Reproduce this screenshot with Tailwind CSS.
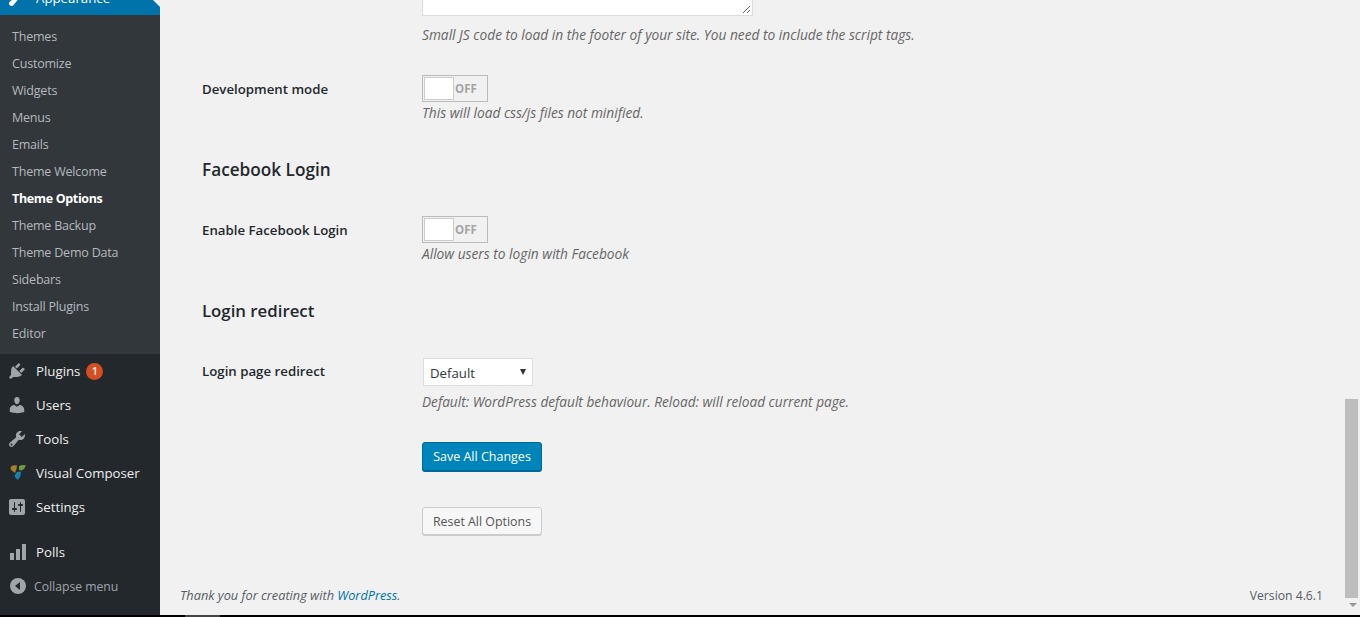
<!DOCTYPE html>
<html>
<head>
<meta charset="utf-8">
<script src="https://cdn.jsdelivr.net/npm/@tailwindcss/browser@4"></script>
</head>
<body class="m-0 h-[617px] w-[1360px] overflow-hidden bg-[#f1f1f1] font-['Open_Sans','Noto_Sans',sans-serif] text-[14px] text-[#444]">
<div class="flex h-[615px] w-full overflow-hidden">
  <aside class="flex h-[615px] w-[160px] shrink-0 flex-col overflow-hidden bg-[#23282d] text-[13.25px] text-[#eee]">
    <div class="relative -mt-[19px] flex h-[34px] shrink-0 items-center bg-[#0073aa] text-white">
      <svg class="ml-[7px] h-[20px] w-[20px]" viewBox="0 0 20 20" fill="#fff"><path d="M16.68 9.77c-1.34 1.34-3.3 1.67-4.95.99l-5.41 6.52c-.99.99-2.59.99-3.58 0s-.99-2.59 0-3.57l6.52-5.42c-.68-1.65-.35-3.61.99-4.95 1.28-1.28 3.12-1.62 4.72-1.06l-2.89 2.89 2.82 2.82 2.86-2.87c.53 1.58.18 3.39-1.08 4.65z"/></svg>
      <span class="ml-[9px] pt-[2px]">Appearance</span>
      <span class="absolute right-0 top-[10px] h-0 w-0 border-y-[8px] border-r-[8px] border-y-transparent border-r-[#f1f1f1]"></span>
    </div>
    <nav class="flex shrink-0 flex-col bg-[#32373c] pb-[7px] pt-[8px] text-[12.5px] leading-[27px] tracking-[-0.2px] text-[#b4b9be]">
      <a class="h-[27px] pl-3">Themes</a>
      <a class="h-[27px] pl-3">Customize</a>
      <a class="h-[27px] pl-3">Widgets</a>
      <a class="h-[27px] pl-3">Menus</a>
      <a class="h-[27px] pl-3">Emails</a>
      <a class="h-[27px] pl-3">Theme Welcome</a>
      <a class="h-[27px] pl-3 font-bold tracking-[-0.35px] text-white">Theme Options</a>
      <a class="h-[27px] pl-3">Theme Backup</a>
      <a class="h-[27px] pl-3">Theme Demo Data</a>
      <a class="h-[27px] pl-3">Sidebars</a>
      <a class="h-[27px] pl-3">Install Plugins</a>
      <a class="h-[27px] pl-3">Editor</a>
    </nav>
    <div class="flex h-[34px] items-center">
      <svg class="ml-[7px] h-[20px] w-[20px]" viewBox="0 0 20 20" fill="#a0a5aa"><path d="M13.11 4.36L9.87 7.6 8 5.73l3.24-3.24c.35-.34 1.05-.2 1.56.32.52.51.66 1.21.31 1.55zm-8 1.77l.91-1.12 9.01 9.01-1.19.84c-.71.71-2.63 1.16-3.82 1.16H6.14L4.9 17.26c-.59.59-1.54.59-2.12 0-.59-.58-.59-1.53 0-2.12l1.24-1.24v-3.88c0-1.13.4-3.19 1.09-3.89zm7.26 3.97l3.24-3.24c.34-.35 1.04-.21 1.55.31.52.51.66 1.21.31 1.55l-3.24 3.25z"/></svg>
      <span class="ml-[9px] pt-[2px]">Plugins</span>
      <span class="ml-[6px] flex h-[17px] w-[17px] items-center justify-center rounded-full bg-[#d54e21] text-[10px] font-semibold text-white">1</span>
    </div>
    <div class="flex h-[34px] items-center">
      <svg class="ml-[7px] h-[20px] w-[20px]" viewBox="0 0 20 20" fill="#a0a5aa"><path d="M10 9.25c-2.27 0-2.73-3.44-2.73-3.44C7 4.02 7.82 2 9.97 2c2.16 0 2.98 2.02 2.71 3.81 0 0-.41 3.44-2.68 3.44zm0 2.57L12.72 10c2.39 0 4.52 2.33 4.52 4.53v2.49s-3.65 1.13-7.24 1.13c-3.65 0-7.24-1.13-7.24-1.13v-2.49c0-2.25 1.94-4.48 4.47-4.48z"/></svg>
      <span class="ml-[9px] pt-[2px]">Users</span>
    </div>
    <div class="flex h-[34px] items-center">
      <svg class="ml-[7px] h-[20px] w-[20px]" viewBox="0 0 20 20" fill="#a0a5aa"><path d="M16.68 9.77c-1.34 1.34-3.3 1.67-4.95.99l-5.41 6.52c-.99.99-2.59.99-3.58 0s-.99-2.59 0-3.57l6.52-5.42c-.68-1.65-.35-3.61.99-4.95 1.28-1.28 3.12-1.62 4.72-1.06l-2.89 2.89 2.82 2.82 2.86-2.87c.53 1.58.18 3.39-1.08 4.65zM3.81 16.21c.4.39 1.04.39 1.43 0 .4-.4.4-1.04 0-1.43-.39-.4-1.03-.4-1.43 0-.39.39-.39 1.03 0 1.43z"/></svg>
      <span class="ml-[9px] pt-[2px]">Tools</span>
    </div>
    <div class="flex h-[34px] items-center">
      <svg class="ml-[9px] h-[18px] w-[18px]" viewBox="0 0 18 18"><path fill="#a8802c" d="M2 2.500Q5 .5 8 1.500L7.500 5 6 9Q3 7 1.500 5z"/><path fill="#6f9a3c" d="M10 2Q14 .5 17 1.500 15.500 5 13 6.500L10 6z"/><path fill="#1583ab" d="M8 8l4-.5L11.500 12 9 16Q6 14 5.500 11.500z"/></svg>
      <span class="ml-[9px] pt-[2px]">Visual Composer</span>
    </div>
    <div class="flex h-[34px] items-center">
      <svg class="ml-[7px] h-[20px] w-[20px]" viewBox="0 0 20 20" fill="#a0a5aa"><path d="M18 16V4c0-1.1-.9-2-2-2H4c-1.1 0-2 .9-2 2v12c0 1.1.9 2 2 2h12c1.1 0 2-.9 2-2zM8 11h1c.55 0 1 .45 1 1s-.45 1-1 1H8v1.500c0 .28-.22.5-.5.5s-.5-.22-.5-.5V13H6c-.55 0-1-.45-1-1s.45-1 1-1h1V5.500c0-.28.22-.5.5-.5s.5.22.5.5V11zm5-2h-1c-.55 0-1-.45-1-1s.45-1 1-1h1V5.500c0-.28.22-.5.5-.5s.5.22.5.5V7h1c.55 0 1 .45 1 1s-.45 1-1 1h-1v5.500c0 .28-.22.5-.5.5s-.5-.22-.5-.5V9z"/></svg>
      <span class="ml-[9px] pt-[2px]">Settings</span>
    </div>
    <div class="mt-[11px] flex h-[34px] items-center">
      <svg class="ml-[9px] h-[18px] w-[18px]" viewBox="0 0 18 18" fill="#a0a5aa"><rect x="1" y="10" width="4" height="7"/><rect x="7" y="6" width="4" height="11"/><rect x="13" y="1" width="4" height="16"/></svg>
      <span class="ml-[9px] pt-[2px]">Polls</span>
    </div>
    <div class="flex h-[34px] items-center text-[12.2px] text-[#a0a5aa]">
      <svg class="ml-[9px] h-[18px] w-[18px]" viewBox="0 0 18 18"><circle cx="9" cy="9" r="8" fill="#a0a5aa"/><path d="M11 5v8L6 9z" fill="#23282d"/></svg>
      <span class="ml-[7px] pt-[2px]">Collapse menu</span>
    </div>
  </aside>
  <main class="relative flex min-w-0 flex-1 flex-col">
    <div class="-mt-[30px] flex flex-col pl-[42px]">
      <div class="flex">
        <div class="w-[220px]"></div>
        <div>
          <div class="relative h-[46px] w-[331px] border border-[#ddd] bg-white shadow-[inset_0_1px_2px_rgba(0,0,0,0.07)]">
            <svg class="absolute bottom-[1px] right-[1px] h-[10px] w-[10px]" viewBox="0 0 10 10" stroke="#666" stroke-width="1"><path d="M2 9L9 2M6 9L9 6"/></svg>
          </div>
          <p class="mt-[9px] h-[20px] text-[13.72px] italic leading-[20px] text-[#666]">Small JS code to load in the footer of your site. You need to include the script tags.</p>
        </div>
      </div>
      <div class="mt-[22px] flex">
        <div class="w-[220px] pt-[9px] text-[13.25px] font-semibold leading-[27px] text-[#23282d]">Development mode</div>
        <div class="mt-[8px]">
          <div class="flex h-[27px] w-[66px] items-center border border-[#bbb]">
            <span class="ml-[1px] h-[23px] w-[30px] border border-[#ccc] bg-white"></span>
            <span class="ml-[1px] text-[11.5px] font-bold text-[#a5a5a5]">OFF</span>
          </div>
          <p class="h-[22px] text-[13.72px] italic leading-[22px] text-[#666]">This will load css/js files not minified.</p>
        </div>
      </div>
      <h2 class="mt-[33px] h-[26px] text-[17.2px] font-semibold leading-[26px] text-[#23282d]">Facebook Login</h2>
      <div class="mt-[26px] flex">
        <div class="w-[220px] pt-[8px] text-[13.25px] font-semibold leading-[27px] text-[#23282d]">Enable Facebook Login</div>
        <div class="mt-[7px]">
          <div class="flex h-[27px] w-[66px] items-center border border-[#bbb]">
            <span class="ml-[1px] h-[23px] w-[30px] border border-[#ccc] bg-white"></span>
            <span class="ml-[1px] text-[11.5px] font-bold text-[#a5a5a5]">OFF</span>
          </div>
          <p class="h-[22px] text-[13.72px] italic leading-[22px] text-[#666]">Allow users to login with Facebook</p>
        </div>
      </div>
      <h2 class="mt-[33px] h-[26px] text-[16.8px] font-semibold leading-[26px] text-[#23282d]">Login redirect</h2>
      <div class="mt-[34px] flex">
        <div class="w-[220px] text-[13.25px] font-semibold leading-[27px] text-[#23282d]">Login page redirect</div>
        <div>
          <div class="ml-[1px] flex h-[28px] w-[110px] items-center justify-between border border-[#ddd] bg-white pl-[6px] pr-[6px] text-[13.25px] text-[#32373c]">
            <span class="pt-[3px]">Default</span>
            <span class="h-0 w-0 border-x-[3px] border-t-[6px] border-x-transparent border-t-[#333]"></span>
          </div>
          <p class="mt-[6px] h-[20px] text-[13.65px] italic leading-[20px] text-[#666]">Default: WordPress default behaviour. Reload: will reload current page.</p>
          <button class="mt-[30px] block h-[29px] w-[120px] rounded-[3px] border border-[#006799] bg-[#0085ba] text-[12.5px] leading-[26px] text-white shadow-[0_1px_0_#006799]">Save All Changes</button>
          <button class="mt-[36px] block h-[28px] w-[120px] rounded-[3px] border border-[#ccc] bg-[#f7f7f7] pt-[1px] text-[12.4px] leading-[26px] text-[#555] shadow-[0_1px_0_#ccc]">Reset All Options</button>
        </div>
      </div>
    </div>
    <footer class="mt-auto flex h-[38px] items-start justify-between pl-[20px] pr-[37px] pt-[8px] text-[12.75px] leading-[20px] text-[#555d66]">
      <span class="italic">Thank you for creating with <a class="text-[#0073aa]">WordPress</a>.</span>
      <span class="pt-[1px] text-[12.2px]">Version 4.6.1</span>
    </footer>
    <div class="absolute bottom-0 right-0 top-0 w-[15px]">
      <div class="absolute left-0 right-[2px] top-[399px] h-[199px] bg-[#bdbdbd]"></div>
      <span class="absolute left-[4px] top-[603px] h-0 w-0 border-x-[4px] border-t-[4px] border-x-transparent border-t-[#999]"></span>
    </div>
  </main>
</div>
<div class="h-[2px] w-full bg-black"><div class="ml-[185px] h-[2px] w-[35px] bg-[#444]"></div></div>
</body>
</html>
